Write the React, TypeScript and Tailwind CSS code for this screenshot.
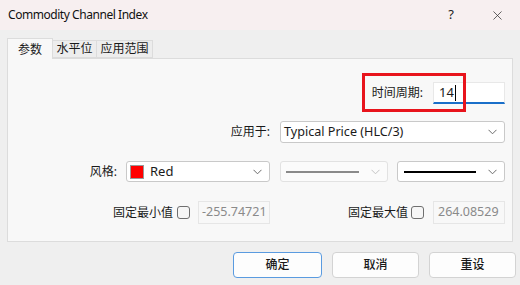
import { X } from "lucide-react";

const font = { fontFamily: '"Noto Sans", "Noto Sans CJK SC", sans-serif' };

function Chevron({ light }: { light?: boolean }) {
  return (
    <svg width="9" height="6" viewBox="0 0 9 6" className="shrink-0">
      <path
        d="M0.5 0.8 L4.5 4.8 L8.5 0.8"
        fill="none"
        stroke={light ? "#c4c4c4" : "#6b6b6b"}
        strokeWidth="1"
      />
    </svg>
  );
}

function Select({
  width,
  disabled,
  children,
}: {
  width: string;
  disabled?: boolean;
  children: React.ReactNode;
}) {
  return (
    <div
      className={`${width} flex items-center justify-between rounded-[3px] border pl-[3px] pr-[7px] ${
        disabled ? "border-[#e2e2e2] bg-[#fbfbfb]" : "border-[#c9c9c9] bg-white"
      }`}
    >
      <div className="flex min-w-0 flex-1 items-center">{children}</div>
      <Chevron light={disabled} />
    </div>
  );
}

function Checkbox() {
  return <div className="h-[13px] w-[13px] rounded-[3px] border border-[#6f6f6f] bg-[#f6f6f6]" />;
}

export default function App() {
  return (
    <div
      className="flex h-[285px] w-[520px] flex-col overflow-hidden bg-[#efefef] text-[12px] text-[#1a1a1a]"
      style={font}
    >
      {/* title bar */}
      <div className="flex h-[30px] shrink-0 items-center bg-[#f7eff0] pl-[8px]">
        <span className="flex-1 text-[12px] tracking-[-0.45px] text-[#111]">Commodity Channel Index</span>
        <span className="mr-[36px] text-[13px] text-[#222]">?</span>
        <X className="mr-[15px] h-[15px] w-[15px] text-[#333]" strokeWidth={1.2} />
      </div>

      {/* tabs */}
      <div className="mt-[8px] flex h-[20px] items-end px-[7px]">
        <div className="relative z-10 -mb-px flex h-[21px] w-[46px] items-start justify-center border border-b-0 border-[#dcdcdc] bg-[#f8f8f8] pt-[2px]">
          参数
        </div>
        <div className="flex h-[18px] w-[44px] items-center justify-center border-y border-r border-[#dcdcdc] bg-[#ededed]">
          水平位
        </div>
        <div className="flex h-[18px] w-[56px] items-center justify-center border-y border-r border-[#dcdcdc] bg-[#ededed]">
          应用范围
        </div>
      </div>

      {/* panel */}
      <div className="relative mx-[7px] flex h-[184px] flex-col border border-[#dcdcdc] bg-[#f8f8f8] pr-[7px] pt-[23px]">
        <div className="flex h-[22px] items-center justify-end">
          <span className="mr-[10px]">时间周期:</span>
          <div className="flex h-[22px] w-[72px] items-center border border-[#e8e8e8] border-b-2 border-b-[#1a6fc9] bg-white pl-[5px] text-[13px]">
            14<span className="ml-px inline-block h-[16px] w-px bg-black" />
          </div>
        </div>
        <div className="pointer-events-none absolute left-[354px] top-[14px] h-[39px] w-[104px] border-[3px] border-[#e8141c]" />

        <div className="mt-[17px] flex h-[22px] items-center justify-end">
          <span className="mr-[10px]">应用于:</span>
          <Select width="w-[225px] h-[22px]">
            <span className="text-[12.6px] text-[#1a1a1a]">Typical Price (HLC/3)</span>
          </Select>
        </div>

        <div className="mt-[18px] flex h-[21px] items-center justify-end">
          <span className="mr-[9px]">风格:</span>
          <Select width="w-[144px] h-[21px]">
            <span className="h-[14px] w-[14px] border border-[#999] bg-[#ff0000]" />
            <span className="ml-[6px] text-[13px]">Red</span>
          </Select>
          <div className="w-[10px]" />
          <Select width="w-[108px] h-[21px]" disabled>
            <span className="ml-[2px] mr-[12px] h-[2px] flex-1 bg-[#8a8a8a]" />
          </Select>
          <div className="w-[9px]" />
          <Select width="w-[108px] h-[21px]">
            <span className="ml-[3px] mr-[12px] h-[2px] flex-1 bg-black" />
          </Select>
        </div>

        <div className="mt-[19px] flex h-[23px] items-center justify-end">
          <span>固定最小值</span>
          <div className="ml-[4px] mr-[8px]">
            <Checkbox />
          </div>
          <div className="flex h-[23px] w-[72px] items-center border border-[#e6e6e6] bg-[#f8f8f8] pl-[3px] text-[12.5px] text-[#8a8a8a]">
            -255.74721
          </div>
          <div className="w-[78px]" />
          <span>固定最大值</span>
          <div className="ml-[3px] mr-[9px]">
            <Checkbox />
          </div>
          <div className="flex h-[23px] w-[72px] items-center border border-[#e6e6e6] bg-[#f8f8f8] pl-[4px] text-[12.5px] text-[#8a8a8a]">
            264.08529
          </div>
        </div>
      </div>

      {/* buttons */}
      <div className="mt-[10px] flex justify-end gap-[10px] pr-[4px]">
        <button className="flex h-[26px] w-[89px] items-center justify-center rounded-[4px] border border-[#5a9be0] bg-[#fdfdfd] font-medium">
          确定
        </button>
        <button className="flex h-[26px] w-[87px] items-center justify-center rounded-[4px] border border-[#d3d3d3] bg-[#fdfdfd] font-medium">
          取消
        </button>
        <button className="flex h-[26px] w-[87px] items-center justify-center rounded-[4px] border border-[#d3d3d3] bg-[#fdfdfd] font-medium">
          重设
        </button>
      </div>
    </div>
  );
}
